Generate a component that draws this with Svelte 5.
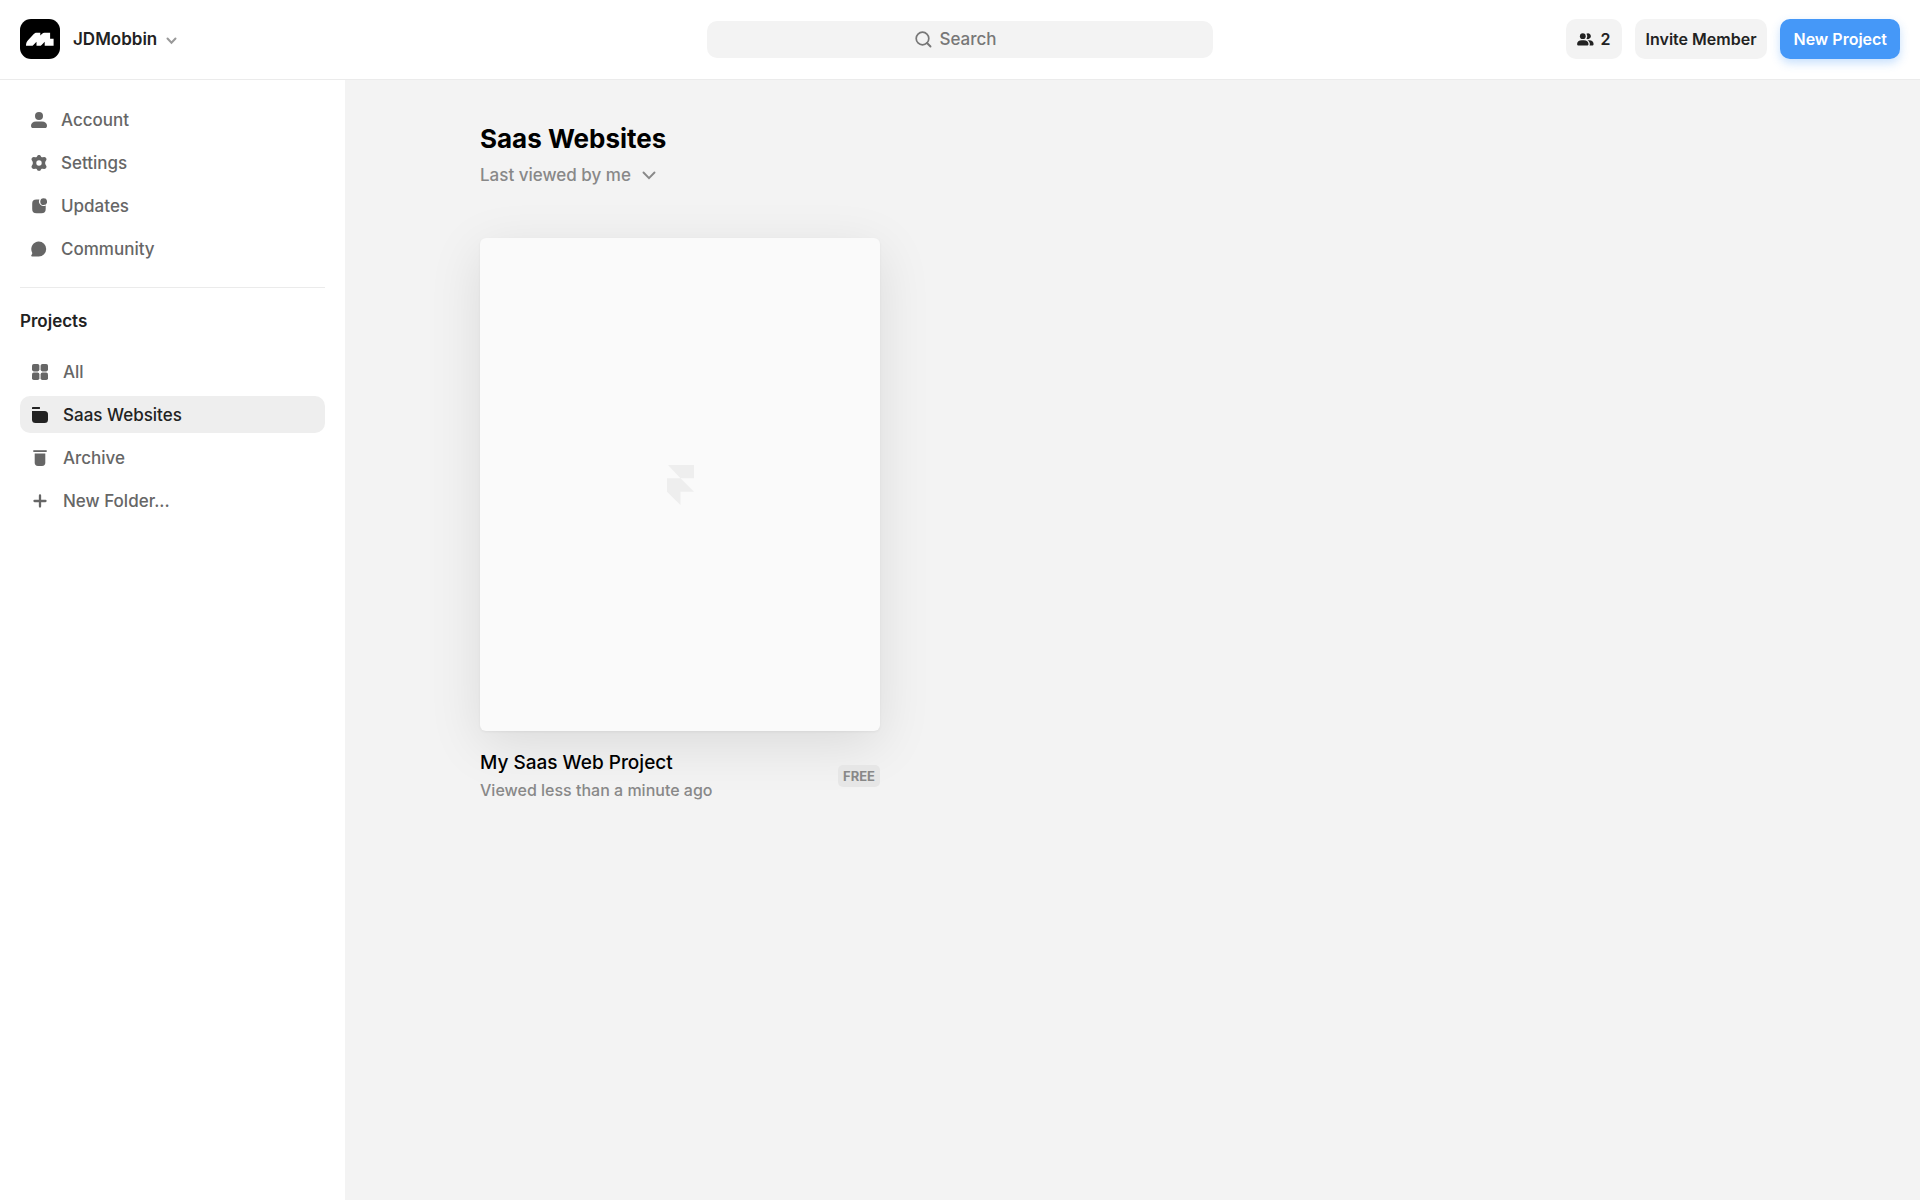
<script>
  let search = $state('');
  let sort = $state('Last viewed by me');
  let activeFolder = $state('Saas Websites');

  const links = ['Account', 'Settings', 'Updates', 'Community'];
  const folders = ['All', 'Saas Websites', 'Archive', 'New Folder...'];

  const projects = [
    { name: 'My Saas Web Project', viewed: 'Viewed less than a minute ago', plan: 'FREE' },
  ];
</script>

{#snippet icon(name)}
  <svg class="icon" viewBox="0 0 16 16" fill="currentColor" aria-hidden="true">
    {#if name === 'Account'}
      <circle cx="8" cy="4" r="4" />
      <path d="M5 9.5h6c3 0 5 1.8 5 4.2 0 1.6-.8 2.3-2.2 2.3H2.2C.8 16 0 15.3 0 13.7 0 11.3 2 9.5 5 9.5z" />
    {:else if name === 'Settings'}
      <path
        fill-rule="evenodd"
        d="M6.3 1C6.8-.2 9.2-.2 9.7 1c.4 1 1 1.3 2.1 1.2l1.3-.1c1.8-.1 3 2 2.1 3.2l-.6.9c-.6.9-.6 2.7 0 3.6l.6.9c.9 1.200-.3 3.300-2.100 3.200l-1.300-.1c-1.100-.1-1.700.2-2.100 1.200-.5 1.200-2.900 1.200-3.400 0-.4-1-1-1.300-2.100-1.200l-1.300.1C1.100 13.900-.1 11.900.8 10.700l.6-.9c.6-.9.6-2.700 0-3.600l-.6-.9C-.1 4.100 1.100 2 2.900 2.100l1.300.1C5.300 2.300 5.900 2 6.300 1zM8 5.300a2.700 2.700 0 1 0 0 5.400 2.700 2.700 0 0 0 0-5.400z"
      />
    {:else if name === 'Updates'}
      <path d="M8.4 1.5a4.600 4.600 0 0 0 6.300 6V11c0 3-1.300 4.300-4.300 4.300H5.500c-3 0-4.300-1.300-4.300-4.300V5.800c0-3 1.300-4.300 4.300-4.300z" />
      <circle cx="12.7" cy="3.7" r="3.4" />
    {:else if name === 'Community'}
      <path d="M7.8.6a7.400 7.400 0 1 1 0 14.800H1.200c-1.100 0-1.300-.8-.7-1.500.9-1.100.9-1.700.5-2.700A7.400 7.400 0 0 1 7.800.6z" />
    {:else if name === 'All'}
      <rect width="7.4" height="7.4" rx="1.8" />
      <rect x="8.6" width="7.4" height="7.4" rx="1.8" />
      <rect y="8.6" width="7.4" height="7.4" rx="1.8" />
      <rect x="8.6" y="8.6" width="7.4" height="7.4" rx="1.8" />
    {:else if name === 'Saas Websites'}
      <path d="M1 0h6.500c.3 0 .5.3.5.6v1c0 .2-.2.4-.4.4H0V1c0-.6.4-1 1-1z" />
      <path d="M0 4h12.500A3.500 3.500 0 0 1 16 7.500v5a3.500 3.500 0 0 1-3.500 3.500h-9A3.500 3.500 0 0 1 0 12.500z" />
    {:else if name === 'Archive'}
      <path d="M1.3.2h13.400V2H1.300z" />
      <path d="M2.700 3.500h10.600v9c0 2.300-1 3.500-3.300 3.500H6c-2.300 0-3.300-1.200-3.300-3.500z" />
    {:else}
      <path d="M8 2.500v11M2.500 8h11" fill="none" stroke="currentColor" stroke-width="2.3" stroke-linecap="round" />
    {/if}
  </svg>
{/snippet}

<div class="app">
  <header class="topbar">
    <button type="button" class="team">
      <span class="logo">
        <svg viewBox="0 0 40 40" aria-hidden="true">
          <path
            fill="#fff"
            d="M6 26.800c0-2.400.5-4.200 2-5.600l5.800-6.100c1-1 1.700-1.400 2.900-1.400h3.600v2.800l1.800-1.800c.7-.7 1.400-1 2.400-1h5.600v6.100h3.500v7h-8.900v-4l-3.100 3.100c-.6.600-1.100.9-1.900.9h-3.200v-4l-3.100 3.100c-.6.600-1.100.9-1.900.9z"
          />
        </svg>
      </span>
      <span class="team-name">JDMobbin</span>
      <svg class="team-chevron" viewBox="0 0 11 8" aria-hidden="true">
        <path d="M1.500 1.500l4 4.200 4-4.200" fill="none" stroke="#999" stroke-width="2" stroke-linecap="round" />
      </svg>
    </button>

    <label class="search">
      <svg viewBox="0 0 17 17" aria-hidden="true">
        <circle cx="7.5" cy="7.5" r="6.3" fill="none" stroke="currentColor" stroke-width="1.7" />
        <path d="M12 12l3.500 3.500" stroke="currentColor" stroke-width="1.9" stroke-linecap="round" />
      </svg>
      <input type="text" placeholder="Search" aria-label="Search" bind:value={search} />
    </label>

    <div class="actions">
      <button type="button" class="btn members" aria-label="2 members">
        <svg viewBox="0 0 17 13" fill="currentColor" aria-hidden="true">
          <circle cx="5.8" cy="3.2" r="2.9" />
          <path d="M4.800 7.200h2c2.900 0 4.700 1.500 4.700 3.700 0 1.200-.6 1.700-1.700 1.700H1.800C.7 12.600.1 12.100.1 10.900.1 8.700 1.900 7.200 4.800 7.200z" />
          <path d="M9.400.7a2.900 2.900 0 1 1 0 5 4.500 4.500 0 0 0 0-5zM10.600 7.200h1.700c2.600 0 4.300 1.500 4.300 3.700 0 1.200-.6 1.700-1.700 1.700h-2.400c.9-2 .1-4.200-1.900-5.400z" />
        </svg>
        <span>2</span>
      </button>
      <button type="button" class="btn">Invite Member</button>
      <button type="button" class="btn primary">New Project</button>
    </div>
  </header>

  <div class="body">
    <aside class="sidebar">
      <nav>
        {#each links as link}
          <a class="item" href="#{link.toLowerCase()}">
            {@render icon(link)}
            {link}
          </a>
        {/each}
      </nav>

      <h2>Projects</h2>

      <div class="folders">
        {#each folders as folder}
          <button
            type="button"
            class="item"
            class:active={folder === activeFolder}
            onclick={() => (activeFolder = folder)}
          >
            {@render icon(folder)}
            {folder}
          </button>
        {/each}
      </div>
    </aside>

    <main>
      <h1>Saas Websites</h1>
      <div class="sort">
        <select bind:value={sort} aria-label="Sort projects">
          <option>Last viewed by me</option>
        </select>
        <svg viewBox="0 0 14 9" aria-hidden="true">
          <path d="M1.500 1.500l5.500 5.700 5.500-5.700" fill="none" stroke="#888" stroke-width="1.9" stroke-linecap="round" />
        </svg>
      </div>

      <div class="grid">
        {#each projects as project}
          <article class="project">
            <a class="thumb" href="#project" aria-label={project.name}>
              <svg viewBox="0 0 27 40" aria-hidden="true">
                <path d="M1 0h26v13.300H13.500zM0 13.300h13.500L27 26.700H13.500V40L0 26.700z" fill="#eee" />
              </svg>
            </a>
            <div class="meta">
              <div>
                <h3>{project.name}</h3>
                <p>{project.viewed}</p>
              </div>
              <span class="plan">{project.plan}</span>
            </div>
          </article>
        {/each}
      </div>
    </main>
  </div>
</div>

<style>
  :global(body) {
    margin: 0;
    background: #f3f3f3;
  }

  .app {
    min-height: 100vh;
    display: flex;
    flex-direction: column;
    font-family: Inter, 'Liberation Sans', sans-serif;
    font-size: 17px;
    font-weight: 500;
    color: #222;
  }

  button,
  input,
  select {
    font: inherit;
    color: inherit;
    border: none;
    background: none;
    padding: 0;
    margin: 0;
  }

  button {
    cursor: pointer;
  }

  h1,
  h2,
  h3,
  p {
    margin: 0;
  }

  svg {
    display: block;
    flex-shrink: 0;
  }

  /* top bar */
  .topbar {
    display: grid;
    grid-template-columns: 1fr minmax(200px, 506px) 1fr;
    align-items: center;
    padding: 19px 20px 20px;
    background: #fff;
    border-bottom: 1px solid #ebebeb;
  }

  .team {
    display: flex;
    align-items: center;
    justify-self: start;
  }

  .logo {
    width: 40px;
    height: 40px;
    border-radius: 11px;
    background: #000;
  }

  .team-name {
    margin: 0 9px 0 13px;
    font-weight: 600;
  }

  .team-chevron {
    width: 11px;
    height: 8px;
    margin-top: 4px;
  }

  .search {
    display: flex;
    align-items: center;
    justify-content: center;
    gap: 7px;
    height: 37px;
    padding-right: 8px;
    border-radius: 10px;
    background: #f3f3f3;
    color: #777;
    cursor: text;
  }

  .search svg {
    width: 17px;
    height: 17px;
  }

  .search input {
    field-sizing: content;
    outline: none;
  }

  .search input::placeholder {
    color: #777;
    opacity: 1;
  }

  .actions {
    display: flex;
    justify-self: end;
    gap: 13px;
  }

  .btn {
    display: flex;
    align-items: center;
    height: 40px;
    padding: 0 11px;
    border-radius: 10px;
    background: #f3f3f3;
    font-size: 16px;
    font-weight: 600;
    white-space: nowrap;
  }

  .members {
    gap: 7px;
  }

  .members svg {
    width: 17px;
    height: 13px;
  }

  .primary {
    padding: 0 13px;
    background: #4598f8;
    color: #fff;
    box-shadow: 0 4px 10px rgba(69, 152, 248, 0.3);
  }

  /* layout */
  .body {
    flex: 1;
    display: flex;
  }

  .sidebar {
    box-sizing: border-box;
    width: 345px;
    flex-shrink: 0;
    padding: 21px 20px;
    background: #fff;
  }

  nav,
  .folders {
    display: flex;
    flex-direction: column;
    gap: 6px;
  }

  nav {
    padding-bottom: 20px;
    border-bottom: 1px solid #ebebeb;
  }

  .item {
    display: flex;
    align-items: center;
    gap: 14px;
    height: 37px;
    padding: 0 11px;
    border-radius: 10px;
    color: #666;
    text-decoration: none;
  }

  .folders .item {
    gap: 15px;
    padding: 0 12px;
  }

  .item.active {
    background: #eee;
    color: #222;
  }

  .icon {
    width: 16px;
    height: 16px;
  }

  h2 {
    margin: 21px 0 20px;
    font-size: 17px;
    line-height: 24px;
    font-weight: 600;
  }

  /* projects */
  main {
    flex: 1;
    padding: 41px 135px;
  }

  h1 {
    font-size: 26px;
    line-height: 36px;
    font-weight: 700;
    color: #000;
  }

  .sort {
    display: flex;
    align-items: center;
    gap: 11px;
    margin: 6px 0 51px;
    color: #888;
  }

  .sort select {
    appearance: none;
    height: 24px;
  }

  .sort svg {
    width: 14px;
    height: 9px;
  }

  .grid {
    display: grid;
    grid-template-columns: repeat(auto-fill, 400px);
    gap: 40px;
  }

  .thumb {
    display: flex;
    align-items: center;
    justify-content: center;
    aspect-ratio: 400 / 493;
    border-radius: 6px;
    background: #fafafa;
    box-shadow:
      0 1px 3px rgba(0, 0, 0, 0.05),
      0 13px 53px rgba(0, 0, 0, 0.1);
  }

  .thumb svg {
    width: 27px;
    height: 40px;
  }

  .meta {
    display: flex;
    align-items: center;
    justify-content: space-between;
    margin-top: 18px;
  }

  h3 {
    font-size: 19px;
    line-height: 28px;
    font-weight: 500;
    color: #000;
  }

  .meta p {
    font-size: 16px;
    line-height: 26px;
    color: #888;
  }

  .plan {
    padding: 0 5px;
    border-radius: 5px;
    background: #e6e6e6;
    color: #888;
    font-size: 13px;
    line-height: 22px;
    font-weight: 700;
  }
</style>
